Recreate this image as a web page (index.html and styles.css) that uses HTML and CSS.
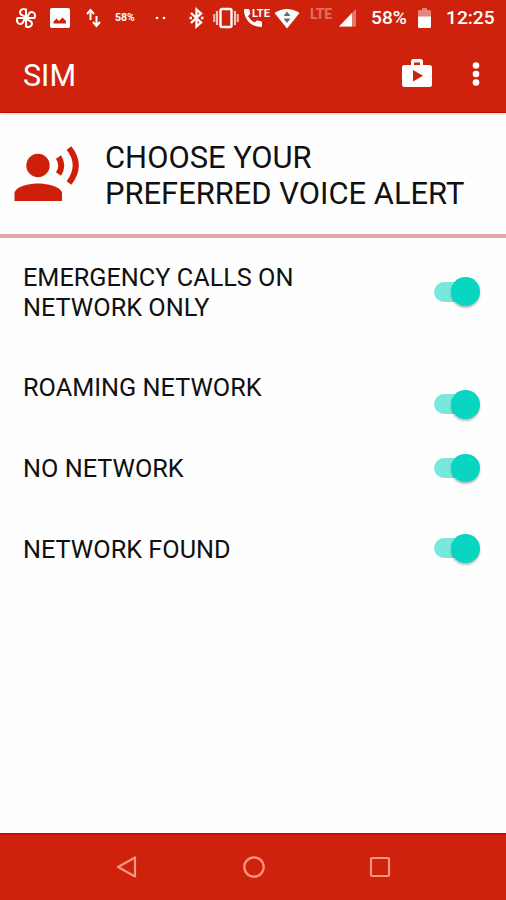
FILE: index.html
```html
<!DOCTYPE html>
<html lang="en">
<head>
<meta charset="utf-8">
<title>SIM</title>
<link rel="stylesheet" href="styles.css">
</head>
<body>
<div class="statusbar">
  <svg width="22" height="22" viewBox="0 0 22 22" fill="none" stroke="#fff" stroke-width="2"><path d="M11 11V2.500C6 .5 3.800 5 6 7.500C7.500 9 10 8.500 11 11Z"/><path transform="rotate(90 11 11)" d="M11 11V2.500C6 .5 3.800 5 6 7.500C7.500 9 10 8.500 11 11Z"/><path transform="rotate(180 11 11)" d="M11 11V2.500C6 .5 3.800 5 6 7.500C7.500 9 10 8.500 11 11Z"/><path transform="rotate(270 11 11)" d="M11 11V2.500C6 .5 3.800 5 6 7.500C7.500 9 10 8.500 11 11Z"/></svg>
  <svg width="20" height="20" viewBox="0 0 20 20"><rect width="20" height="20" rx="2" fill="#fff"/><path d="M3.500 15.500V13.500L6.500 10.500L9 13L12.500 9.500L16 13V15.500Z" fill="#ce220d"/></svg>
  <svg width="15" height="20" viewBox="0 0 15 20" fill="none" stroke="#fff" stroke-width="2"><path d="M4.500 12V3M1 6L4.500 2L8 6M10.500 8V17M7 14L10.500 18L14 14"/></svg>
  <span class="mini">58%</span>
  <svg width="12" height="4" viewBox="0 0 12 4" fill="#fff"><circle cx="2" cy="2" r="1.300"/><circle cx="9" cy="2" r="1.300"/></svg>
  <svg width="16" height="22" viewBox="0 0 16 22" fill="none" stroke="#fff" stroke-width="2.300"><path d="M2 6L12 15.500L7.500 19.500V2.500L12 6.500L2 16"/><path d="M.5 11H3M12 11H14.500"/></svg>
  <svg width="26" height="22" viewBox="0 0 26 22" fill="none" stroke="#fff" stroke-width="2.200"><rect x="7.500" y="2" width="11" height="18" rx="1.500" stroke-width="2.400"/><path d="M4 4V18M22 4V18" stroke-opacity=".75"/><path d="M1.200 7V15M24.800 7V15" stroke-opacity=".65"/></svg>
  <svg width="27" height="22" viewBox="0 0 27 22" fill="#fff"><path d="M0 3Q0 2 1 2H4.500Q5.300 2 5.500 3L6.200 6Q6.300 6.800 5.800 7.300L4 9.300Q6.500 13.500 10.500 15.500L12.500 13.700Q13 13.300 13.800 13.500L17 14.300Q18 14.600 18 15.500V19Q18 20 17 20C7 20 0 12 0 3Z"/><text x="8" y="9.500" font-size="11" font-weight="700" textLength="18">LTE</text></svg>
  <svg width="26" height="21" viewBox="0 0 26 21"><path d="M.5 5Q13-3 25.500 5L13 20.500Z" fill="#fff"/><path d="M9.500 8L13 3.500L16.500 8ZM9.500 10.500L13 15L16.500 10.500Z" fill="#62716d"/></svg>
  <span class="lte">LTE</span>
  <svg width="18" height="18" viewBox="0 0 18 18"><path d="M0 17.500L17 0V17.500Z" fill="#fff" opacity=".4"/><path d="M0 17.500L13 4V17.500Z" fill="#fff"/></svg>
  <span class="pct">58%</span>
  <svg width="13" height="20" viewBox="0 0 13 20" fill="#fff"><path opacity=".45" d="M0 9V3.500Q0 2 1.500 2H4V0H9V2H11.500Q13 2 13 3.500V9Z"/><path d="M0 8.500H13V18.500Q13 20 11.500 20H1.500Q0 20 0 18.500Z"/></svg>
  <span class="time">12:25</span>
</div>
<header class="appbar">
  <h1>SIM</h1>
  <svg class="store" width="30" height="28" viewBox="0 0 30 28"><path d="M9 6V2.500Q9 0 11.500 0H18.500Q21 0 21 2.500V6H27.500Q30 6 30 8.500V25.500Q30 28 27.500 28H2.500Q0 28 0 25.500V8.500Q0 6 2.500 6ZM12 6H18V3.500H12ZM11 11V22.500L21 16.700Z" fill="#fff" fill-rule="evenodd"/></svg>
  <svg width="8" height="24" viewBox="0 0 8 24" fill="#fff"><circle cx="4" cy="3.500" r="3.300"/><circle cx="4" cy="12" r="3.300"/><circle cx="4" cy="20.500" r="3.300"/></svg>
</header>
<section class="hero">
  <svg width="66" height="56" viewBox="0 0 66 56"><circle cx="24" cy="19.500" r="11.700" fill="#d01f08"/><path d="M.5 55V47.500C.5 41 14 37.500 24 37.500S48 41 48 47.500V55Z" fill="#d01f08"/><path d="M44.500 11Q50 19.500 44.500 28M55 2Q68.500 19.500 55 37" fill="none" stroke="#d01f08" stroke-width="6"/></svg>
  <h2>CHOOSE YOUR<br>PREFERRED VOICE ALERT</h2>
</section>
<main class="list">
  <div class="row tall"><span>EMERGENCY CALLS ON<br>NETWORK ONLY</span><i class="switch"></i></div>
  <div class="row roaming"><span>ROAMING NETWORK</span><i class="switch"></i></div>
  <div class="row"><span>NO NETWORK</span><i class="switch"></i></div>
  <div class="row"><span>NETWORK FOUND</span><i class="switch"></i></div>
</main>
<nav class="navbar">
  <svg width="22" height="24" viewBox="0 0 22 24"><path d="M2 12L19 2.500V21.500Z"/></svg>
  <svg width="24" height="24" viewBox="0 0 24 24"><circle cx="12" cy="12" r="9.700"/></svg>
  <svg width="22" height="24" viewBox="0 0 22 24"><rect x="2" y="3" width="18" height="18" rx="1"/></svg>
</nav>
</body>
</html>
```
FILE: styles.css
```css
* { box-sizing: border-box; }
body {
  margin: 0;
  height: 900px;
  display: flex;
  flex-direction: column;
  overflow: hidden;
  background: #fefefe;
  color: #111;
  font-family: Roboto, "Liberation Sans", sans-serif;
}
svg { display: block; flex: none; }
h1, h2 { margin: 0; font-weight: 400; }

.statusbar {
  height: 36px;
  flex: none;
  display: grid;
  grid-template-columns: 35px 36px 29px 40px 34px 24px 31px 30px 36px 29px 32px 47px 28px 50px;
  align-items: center;
  padding-left: 15px;
  background: #ce220d;
  color: #fff;
  line-height: 1;
  white-space: nowrap;
}
.mini { font-size: 10.500px; font-weight: 700; }
.lte { font-size: 14px; font-weight: 700; letter-spacing: -.2px; opacity: .35; padding-bottom: 9px; }
.pct, .time { font-size: 19.200px; font-weight: 500; }

.appbar {
  height: 77px;
  flex: none;
  display: flex;
  align-items: center;
  padding: 0 26px 0 23px;
  background: #ce220d;
  border-bottom: 1px solid #c01508;
  color: #fff;
  box-shadow: 0 1px 3px rgba(0, 0, 0, .2);
}
.appbar h1 { flex: 1; padding-top: 3px; font-size: 30.500px; line-height: 36px; }
.store { margin: 0 40px 2px 0; }

.hero {
  height: 125px;
  flex: none;
  display: flex;
  align-items: center;
  gap: 25px;
  padding: 2px 0 1px 14px;
  border-bottom: 4px solid #dfa8a8;
}
.hero h2 { padding-top: 4px; font-size: 30.900px; line-height: 36px; white-space: nowrap; }

.list { flex: 1; }
.row {
  height: 80.500px;
  display: flex;
  align-items: center;
  justify-content: space-between;
  padding: 0 26px 0 23px;
  font-size: 25.250px;
  line-height: 29.300px;
}
.row span { padding-top: 2px; }
.tall { height: 109px; }
.tall span { padding-top: 0; }
.tall .switch { margin-bottom: 2px; }
.roaming span { padding-top: 1px; }
.roaming .switch { margin-top: 34px; }
.switch {
  width: 46px;
  height: 30px;
  display: flex;
  align-items: center;
}
.switch::before {
  content: "";
  width: 30px;
  height: 20px;
  border-radius: 10px;
  background: #76e9da;
}
.switch::after {
  content: "";
  width: 28.500px;
  height: 28.500px;
  margin-left: -13px;
  border-radius: 50%;
  background: #08d6c0;
  box-shadow: 0 2px 2px rgba(0, 0, 0, .25);
}

.navbar {
  height: 67px;
  flex: none;
  display: flex;
  justify-content: space-between;
  align-items: center;
  padding: 0 115px 2px 116px;
  background: #ce220d;
  border-top: 2px solid #c80b05;
}
.navbar svg { fill: none; stroke: #fa9583; stroke-width: 2.200; stroke-linejoin: round; }
```
